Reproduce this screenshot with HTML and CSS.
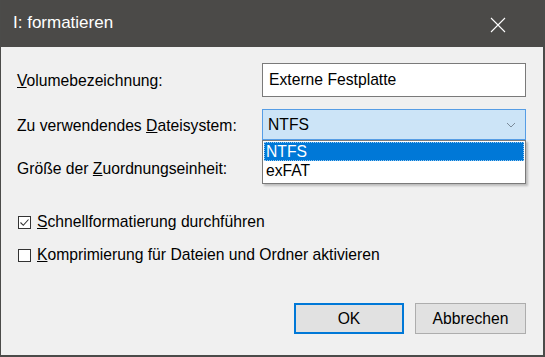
FILE: index.html
```html
<!DOCTYPE html>
<html lang="de">
<head>
<meta charset="utf-8">
<title>I: formatieren</title>
<link rel="stylesheet" href="styles.css">
</head>
<body>
<div class="window">
  <div class="titlebar">
    <span class="title">I: formatieren</span>
    <svg class="close" width="16" height="16" viewBox="0 0 16 16"><path d="M1 1 L15 15 M15 1 L1 15" stroke="#ffffff" stroke-width="1.1" fill="none"/></svg>
  </div>
  <div class="content">
    <div class="form">
      <label class="label"><u>V</u>olumebezeichnung:</label>
      <div class="textbox">Externe Festplatte</div>
      <label class="label">Zu verwendendes <u>D</u>ateisystem:</label>
      <div class="combo active">
        <span>NTFS</span>
        <svg class="chev" width="10" height="6" viewBox="0 0 10 6"><path d="M1 1 L5 5 L9 1" stroke="#7a8a99" stroke-width="1" fill="none"/></svg>
        <div class="dropdown">
          <div class="item selected">NTFS</div>
          <div class="item">exFAT</div>
        </div>
      </div>
      <label class="label">Größe der <u>Z</u>uordnungseinheit:</label>
      <div class="combo"></div>
    </div>
    <div class="checks">
      <label class="check"><span class="box checked"><svg width="11" height="11" viewBox="0 0 11 11"><path d="M1.5 5.5 L4.3 8.3 L9.5 2.5" stroke="#333" stroke-width="1.1" fill="none"/></svg></span><span><u>S</u>chnellformatierung durchführen</span></label>
      <label class="check"><span class="box"></span><span><u>K</u>omprimierung für Dateien und Ordner aktivieren</span></label>
    </div>
    <div class="buttons">
      <button class="btn default">OK</button>
      <button class="btn">Abbrechen</button>
    </div>
  </div>
</div>
</body>
</html>
```
FILE: styles.css
```css
* { box-sizing: border-box; }
html, body { margin: 0; padding: 0; }
body {
  width: 545px;
  height: 357px;
  overflow: hidden;
  font-family: "Liberation Sans", Arial, sans-serif;
  font-size: 15.7px;
  color: #000;
}
.window {
  width: 545px;
  height: 357px;
  display: flex;
  flex-direction: column;
  background: #f0f0f0;
  border-left: 1px solid #4b4b49;
  border-right: 2px solid #4b4b49;
  border-bottom: 2px solid #4b4b49;
}
.titlebar {
  height: 47px;
  flex: none;
  background: #4b4a48;
  color: #ffffff;
  display: flex;
  align-items: center;
  justify-content: space-between;
  padding: 0 37px 0 12px;
}
.title { font-size: 17px; padding-bottom: 1px; }
.close { margin-top: 2px; }
.content {
  flex: 1;
  display: flex;
  flex-direction: column;
  padding: 16px 17px 21px 16px;
}
.form {
  display: grid;
  grid-template-columns: 245px 264px;
  grid-template-rows: 34px 31px 31px;
  row-gap: 12px;
  align-items: center;
}
.label { padding-top: 2px; }
.textbox {
  height: 34px;
  background: #fff;
  border: 1px solid #7a7a7a;
  padding: 0 0 0 6px;
  display: flex;
  align-items: center;
}
.combo {
  position: relative;
  height: 31px;
  border: 1px solid #adadad;
  background: #e5e5e5;
  display: flex;
  align-items: center;
  justify-content: space-between;
  padding: 0 9px 0 5px;
}
.combo.active {
  background: #cce4f7;
  border-color: #569de5;
}
.dropdown {
  position: absolute;
  left: -1px;
  top: 30px;
  width: 264px;
  height: 44px;
  background: #fff;
  border: 1px solid #7a7a7a;
  padding: 1px;
  box-shadow: 2px 2px 2px rgba(0,0,0,0.22);
  z-index: 2;
}
.item {
  height: 19px;
  line-height: 19px;
  padding-left: 2px;
}
.item.selected {
  background: #0078d7;
  color: #fff;
  outline: 1px dotted #99c9ef;
  outline-offset: -1px;
}
.checks {
  margin-top: 29px;
  display: flex;
  flex-direction: column;
  gap: 13px;
}
.check {
  display: flex;
  align-items: center;
  gap: 6px;
  height: 20px;
  padding-left: 1px;
}
.box {
  width: 13px;
  height: 13px;
  border: 1px solid #333;
  background: #fff;
  display: flex;
  align-items: center;
  justify-content: center;
}
.box svg { display: block; }
.buttons {
  margin-top: auto;
  display: flex;
  justify-content: flex-end;
  gap: 11px;
}
.btn {
  width: 111px;
  height: 31px;
  font-family: inherit;
  font-size: 15.7px;
  background: #e1e1e1;
  border: 1px solid #adadad;
  color: #000;
  padding: 0;
}
.btn.default {
  width: 110px;
  border: 2px solid #0078d7;
}
```
